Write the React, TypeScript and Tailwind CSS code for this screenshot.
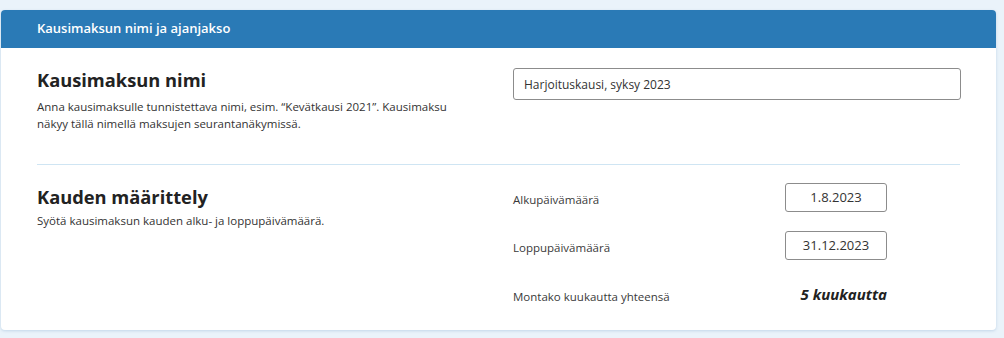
const dates = [
  { label: "Alkupäivämäärä", value: "1.8.2023" },
  { label: "Loppupäivämäärä", value: "31.12.2023" },
];

export default function App() {
  return (
    <div
      className="min-h-[338px] w-[1004px] bg-[#eaf3fa] pt-[10px]"
      style={{ fontFamily: '"Open Sans", "Noto Sans", sans-serif' }}
    >
      <div className="ml-px w-[995px] overflow-hidden rounded-[4px] bg-white shadow-[0_1px_3px_rgba(120,160,200,0.35)]">
        <header className="flex h-[38px] items-center bg-[#2a7ab6] px-9">
          <h2 className="text-[13px] font-semibold text-white">Kausimaksun nimi ja ajanjakso</h2>
        </header>

        <div className="px-9 pb-[21px]">
          <section className="grid grid-cols-[476px_1fr] pt-5">
            <div>
              <h3 className="text-[18.3px] font-bold leading-[23px] text-[#222]">Kausimaksun nimi</h3>
              <p className="mt-[7px] w-[420px] text-[11.5px] leading-[17px] text-[#333]">
                Anna kausimaksulle tunnistettava nimi, esim. “Kevätkausi 2021”. Kausimaksu näkyy tällä nimellä maksujen seurantanäkymissä.
              </p>
            </div>
            <div>
              <input
                readOnly
                value="Harjoituskausi, syksy 2023"
                className="h-[32px] w-[448px] rounded-[3px] border border-[#8c8c8c] px-[10px] text-[12px] text-[#333] outline-none"
              />
            </div>
          </section>

          <div className="mt-[32px] h-px bg-[#cfe5f3]" />

          <section className="grid grid-cols-[476px_1fr] pt-5">
            <div>
              <h3 className="text-[18.3px] font-bold leading-[23px] text-[#222]">Kauden määrittely</h3>
              <p className="mt-[4px] text-[11.5px] leading-[17px] text-[#333]">
                Syötä kausimaksun kauden alku- ja loppupäivämäärä.
              </p>
            </div>
            <div className="-mt-[2px] flex flex-col gap-[19px]">
              {dates.map((d) => (
                <div key={d.label} className="grid h-[29px] grid-cols-[272px_102px] items-center">
                  <span className="pt-1 text-[11.5px] text-[#3a3a3a]">{d.label}</span>
                  <div className="flex h-[29px] items-center justify-center rounded-[3px] border border-[#8c8c8c] text-[13px] text-[#333]">
                    {d.value}
                  </div>
                </div>
              ))}
              <div className="mt-px grid h-[29px] grid-cols-[272px_102px] items-center">
                <span className="pt-1 text-[11.5px] text-[#3a3a3a]">Montako kuukautta yhteensä</span>
                <span className="whitespace-nowrap text-right text-[15px] font-bold italic text-[#222]">5 kuukautta</span>
              </div>
            </div>
          </section>
        </div>
      </div>
    </div>
  );
}
